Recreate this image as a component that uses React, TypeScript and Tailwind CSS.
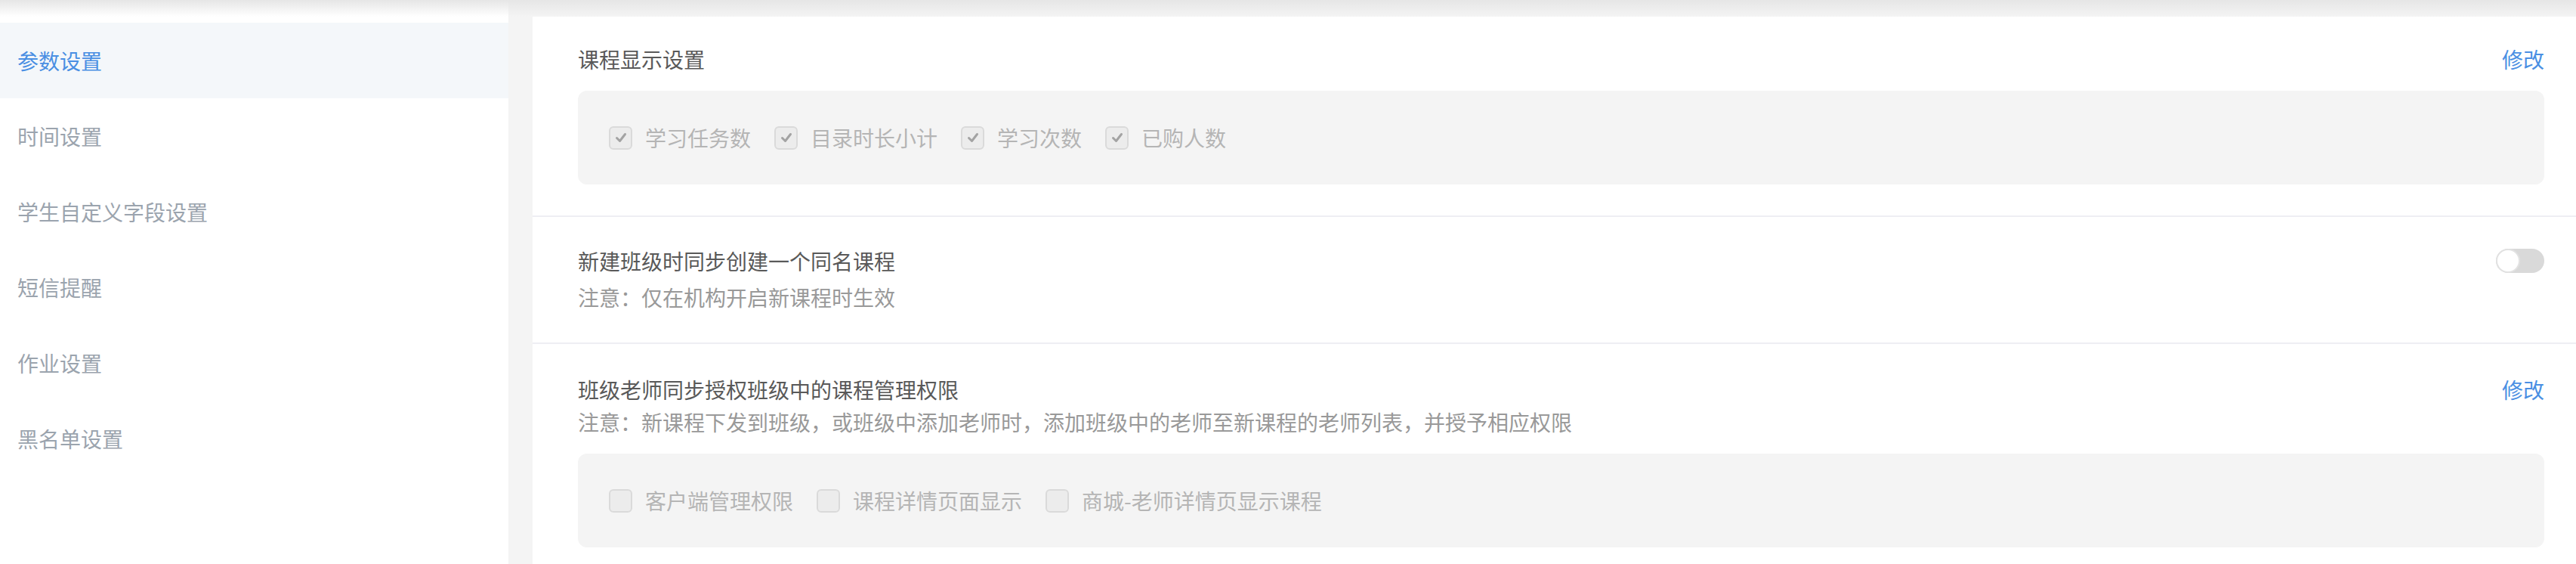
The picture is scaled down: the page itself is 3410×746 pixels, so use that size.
import React from "react";

const font = { fontFamily: '"Noto Sans CJK SC", "Noto Sans", sans-serif' };

function Check({ checked }: { checked: boolean }) {
  return (
    <span className="w-[31px] h-[31px] shrink-0 rounded-[6px] border-2 border-[#dadada] bg-[#ececec] flex items-center justify-center">
      {checked && (
        <svg width="18" height="18" viewBox="0 0 18 18">
          <path d="M3.5 9.5 L7.5 13.5 L14.5 4.5" fill="none" stroke="#a3a3a3" strokeWidth="3" strokeLinecap="round" strokeLinejoin="round" />
        </svg>
      )}
    </span>
  );
}

function CheckItem({ label, checked }: { label: string; checked: boolean }) {
  return (
    <div className="flex items-center gap-[17px]">
      <Check checked={checked} />
      <span className="text-[28px] leading-[40px] text-[#b5b5b5] whitespace-nowrap">{label}</span>
    </div>
  );
}

export default function App() {
  const menu = ["参数设置", "时间设置", "学生自定义字段设置", "短信提醒", "作业设置", "黑名单设置"];
  return (
    <div className="relative w-full h-[746px] bg-[#f4f4f4] flex overflow-hidden" style={font}>
      <aside className="w-[673px] shrink-0 bg-white pt-[30px] flex flex-col">
        {menu.map((m, i) => (
          <div
            key={m}
            className={
              i === 0
                ? "h-[100px] flex items-center pl-[23px] text-[28px] bg-[#f4f7fa] text-[#4a8fe3]"
                : "h-[100px] flex items-center pl-[23px] text-[28px] text-[#9ba4ae]"
            }
          >
            {m}
          </div>
        ))}
      </aside>
      <main className="flex-1 pl-[32px] pt-[22px] min-w-0">
        <div className="bg-white h-full">
          <section className="pl-[60px] pr-[42px] pt-[36px] pb-[41px] border-b-2 border-[#eeeef3]">
            <div className="flex justify-between items-center h-[40px]">
              <span className="text-[28px] text-[#595959]">课程显示设置</span>
              <span className="text-[28px] text-[#4a8fe3]">修改</span>
            </div>
            <div className="mt-[22px] h-[124px] rounded-[12px] bg-[#f4f4f4] pl-[41px] flex items-center gap-[31px]">
              <CheckItem label="学习任务数" checked />
              <CheckItem label="目录时长小计" checked />
              <CheckItem label="学习次数" checked />
              <CheckItem label="已购人数" checked />
            </div>
          </section>
          <section className="pl-[60px] pr-[42px] pt-[38px] pb-[40px] border-b-2 border-[#eeeef3]">
            <div className="flex justify-between items-center h-[40px]">
              <span className="text-[28px] text-[#595959]">新建班级时同步创建一个同名课程</span>
              <span className="w-[64px] h-[32px] rounded-full bg-[#d9d9d9] flex items-center">
                <span className="w-[32px] h-[32px] rounded-full bg-white border-2 border-[#e2e2e2]" />
              </span>
            </div>
            <div className="mt-[8px] h-[40px] leading-[40px] text-[28px] text-[#999999]">注意：仅在机构开启新课程时生效</div>
          </section>
          <section className="pl-[60px] pr-[42px] pt-[40px]">
            <div className="flex justify-between items-center h-[40px]">
              <span className="text-[28px] text-[#595959]">班级老师同步授权班级中的课程管理权限</span>
              <span className="text-[28px] text-[#4a8fe3]">修改</span>
            </div>
            <div className="mt-[3px] h-[40px] leading-[40px] text-[28px] text-[#999999]">
              注意：新课程下发到班级，或班级中添加老师时，添加班级中的老师至新课程的老师列表，并授予相应权限
            </div>
            <div className="mt-[22px] h-[124px] rounded-[12px] bg-[#f4f4f4] pl-[41px] flex items-center gap-[31px]">
              <CheckItem label="客户端管理权限" checked={false} />
              <CheckItem label="课程详情页面显示" checked={false} />
              <CheckItem label="商城-老师详情页显示课程" checked={false} />
            </div>
          </section>
        </div>
      </main>
      <div className="pointer-events-none absolute top-0 left-0 right-0 h-[22px] bg-gradient-to-b from-[#e6e6e6] to-transparent" />
    </div>
  );
}
